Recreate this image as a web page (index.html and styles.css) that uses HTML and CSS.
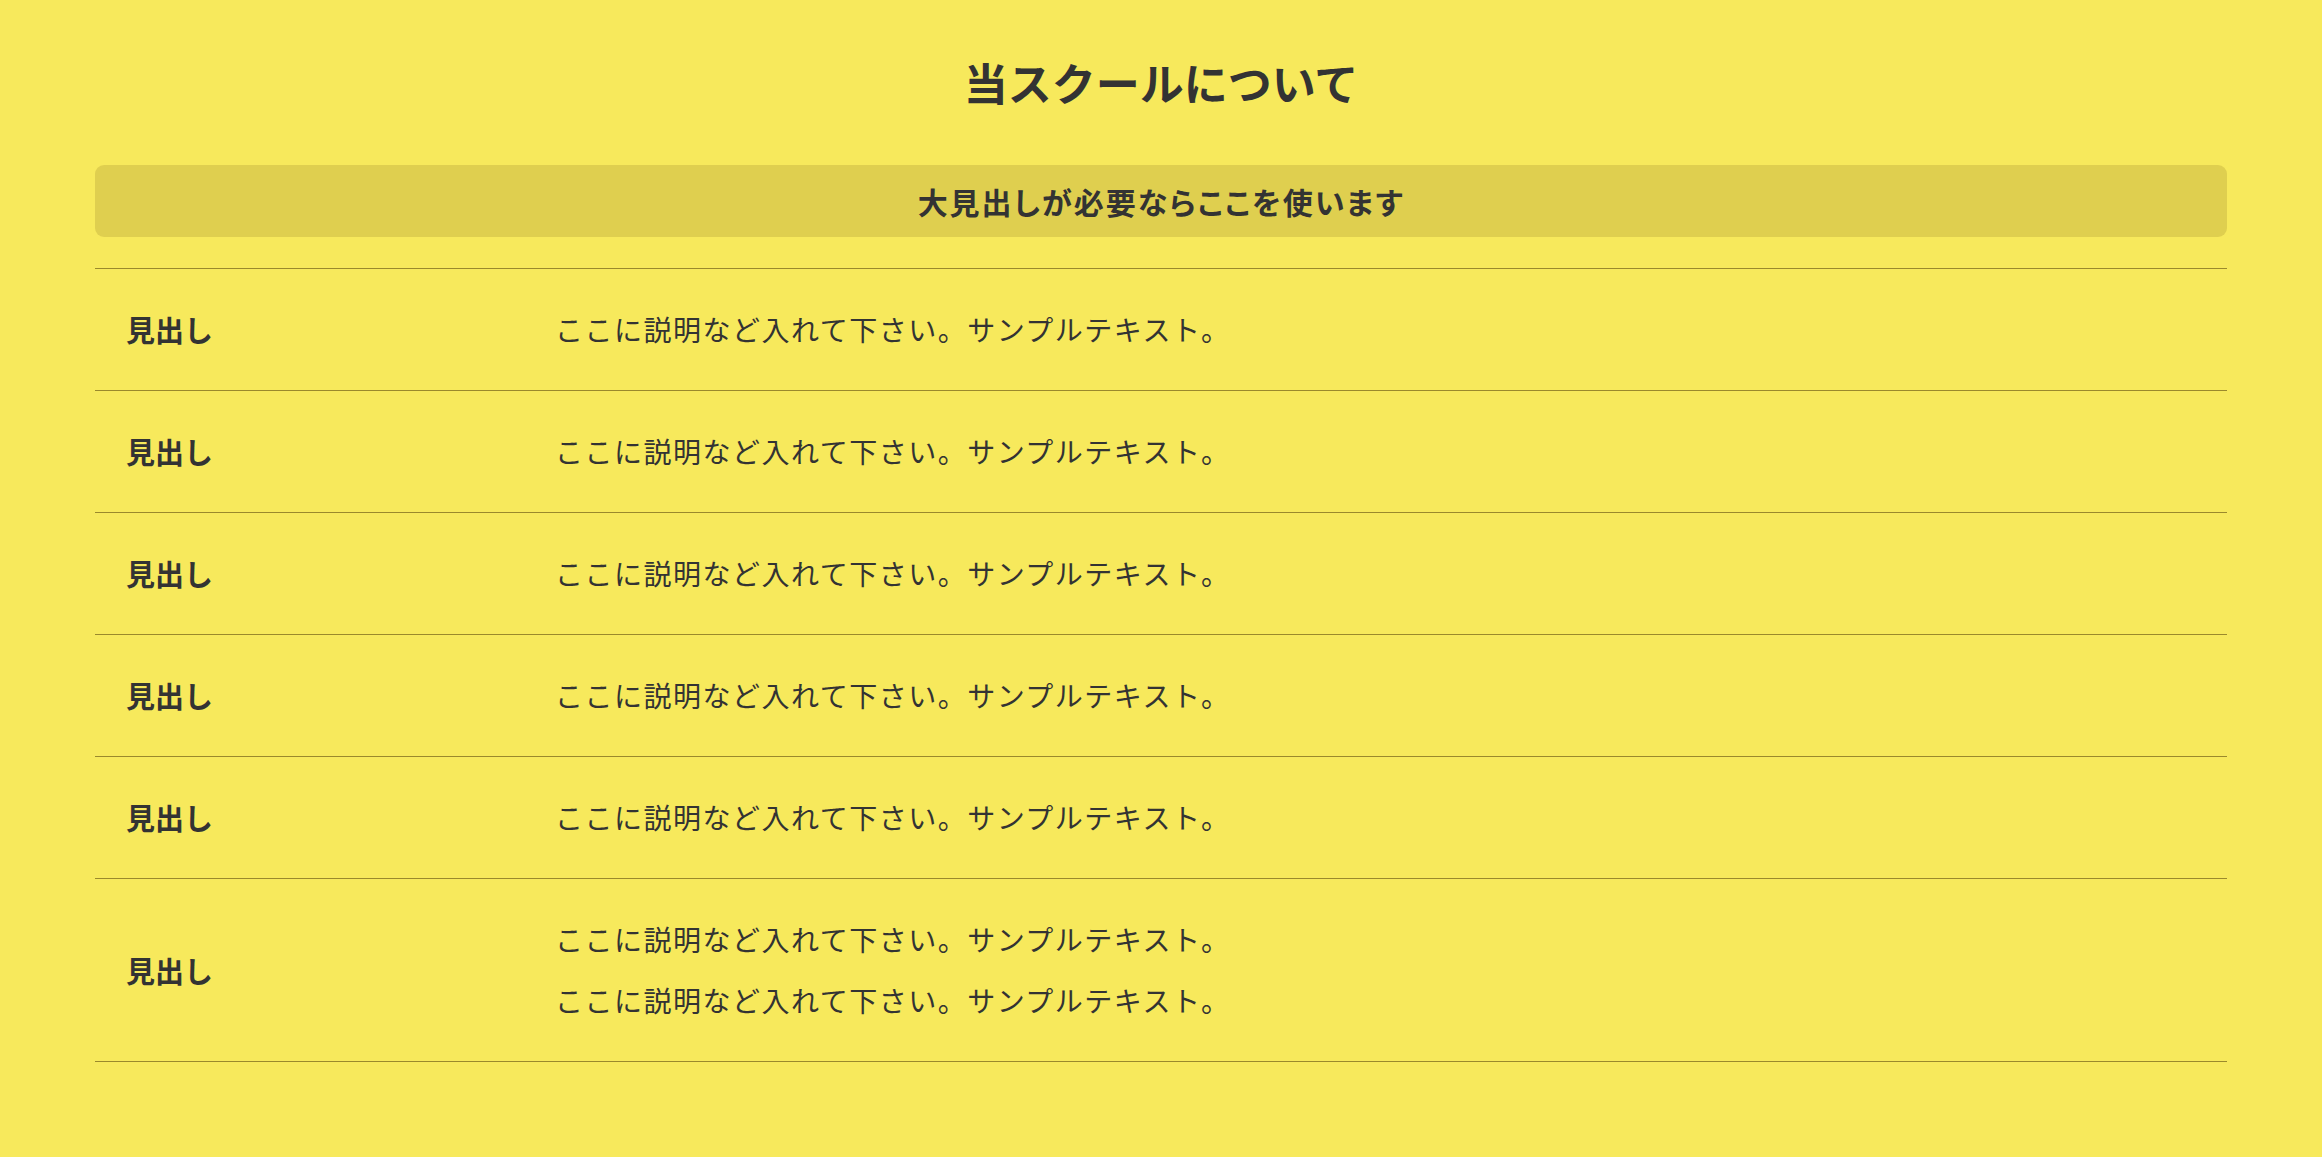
FILE: index.html
```html
<!DOCTYPE html>
<html lang="ja">
<head>
<meta charset="utf-8">
<title>当スクールについて</title>
<link rel="stylesheet" href="styles.css">
</head>
<body>
<main class="page">
  <h1 class="page-title">当スクールについて</h1>
  <h2 class="section-head">大見出しが必要ならここを使います</h2>
  <dl class="info-list">
    <div class="info-row">
      <dt class="info-label">見出し</dt>
      <dd class="info-desc"><p>ここに説明など入れて下さい。サンプルテキスト。</p></dd>
    </div>
    <div class="info-row">
      <dt class="info-label">見出し</dt>
      <dd class="info-desc"><p>ここに説明など入れて下さい。サンプルテキスト。</p></dd>
    </div>
    <div class="info-row">
      <dt class="info-label">見出し</dt>
      <dd class="info-desc"><p>ここに説明など入れて下さい。サンプルテキスト。</p></dd>
    </div>
    <div class="info-row">
      <dt class="info-label">見出し</dt>
      <dd class="info-desc"><p>ここに説明など入れて下さい。サンプルテキスト。</p></dd>
    </div>
    <div class="info-row">
      <dt class="info-label">見出し</dt>
      <dd class="info-desc"><p>ここに説明など入れて下さい。サンプルテキスト。</p></dd>
    </div>
    <div class="info-row">
      <dt class="info-label">見出し</dt>
      <dd class="info-desc"><p>ここに説明など入れて下さい。サンプルテキスト。</p><p>ここに説明など入れて下さい。サンプルテキスト。</p></dd>
    </div>
  </dl>
</main>
</body>
</html>
```

FILE: styles.css
```css
html, body {
  margin: 0;
  padding: 0;
  background: #f7e95c;
}

body {
  font-family: "Noto Sans CJK JP", "Noto Sans", sans-serif;
  color: #333333;
  min-height: 1157px;
}

.page {
  width: 2132px;
  margin: 0 auto;
  padding-top: 50px;
}

.page-title {
  margin: 0 0 50px;
  font-size: 44px;
  font-weight: 700;
  line-height: 65px;
  text-align: center;
}

.section-head {
  margin: 0;
  height: 72px;
  display: flex;
  align-items: center;
  justify-content: center;
  background: #dfcf4f;
  border-radius: 9px;
  font-size: 30px;
  font-weight: 700;
  letter-spacing: 2px;
  font-feature-settings: "palt";
}

.info-list {
  margin: 31px 0 0;
  border-top: 1px solid #9a892c;
}

.info-row {
  display: grid;
  grid-template-columns: 460px 1fr;
  align-items: center;
  padding: 30px 0;
  border-bottom: 1px solid #9a892c;
}

.info-label {
  padding-left: 31px;
  font-size: 29px;
  font-weight: 700;
  line-height: 61px;
}

.info-desc {
  margin: 0;
  font-size: 28px;
  letter-spacing: 1.5px;
  line-height: 61px;
}

.info-desc p {
  margin: 0;
}
```
